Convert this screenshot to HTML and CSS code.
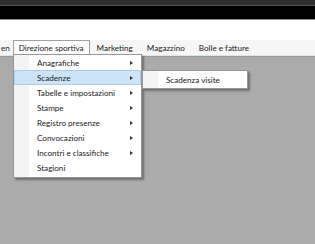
FILE: index.html
```html
<!DOCTYPE html>
<html>
<head>
<meta charset="utf-8" />
<title>Direzione sportiva</title>
<link rel="stylesheet" href="styles.css">
</head>
<body>
<div id="window">
	<div class="titlebar"></div>
	<div class="toolbar"></div>
	<div class="blank"></div>
	<div class="menubar">
		<span class="menu-item cut">en</span>
		<span class="menu-item open">Direzione sportiva</span>
		<span class="menu-item">Marketing</span>
		<span class="menu-item">Magazzino</span>
		<span class="menu-item">Bolle e fatture</span>
	</div>
	<div class="workspace"></div>

	<div class="dropdown">
		<div class="entry"><span class="label">Anagrafiche</span><span class="arrow"></span></div>
		<div class="entry active"><span class="label">Scadenze</span><span class="arrow"></span></div>
		<div class="entry"><span class="label">Tabelle e impostazioni</span><span class="arrow"></span></div>
		<div class="entry"><span class="label">Stampe</span><span class="arrow"></span></div>
		<div class="entry"><span class="label">Registro presenze</span><span class="arrow"></span></div>
		<div class="entry"><span class="label">Convocazioni</span><span class="arrow"></span></div>
		<div class="entry"><span class="label">Incontri e classifiche</span><span class="arrow"></span></div>
		<div class="entry"><span class="label">Stagioni</span></div>
	</div>

	<div class="dropdown submenu">
		<div class="entry"><span class="label">Scadenza visite</span></div>
	</div>
</div>
</body>
</html>
```

FILE: styles.css
```css
body {
	margin: 0;
	background: #ababab;
	font-family: Lato, "Noto Sans", sans-serif;
	font-size: 8.1px;
	color: #1a1a1a;
}
#window {
	position: relative;
	width: 315px;
	height: 244px;
	overflow: hidden;
	display: flex;
	flex-direction: column;
}
.titlebar {
	height: 5px;
	background: #2f2f2f;
	border-bottom: 1px solid #555555;
}
.toolbar {
	height: 13px;
	background: #000000;
	border-bottom: 1px solid #8c8c8c;
}
.blank {
	height: 20px;
	background: #ffffff;
}
.menubar {
	height: 15px;
	background: #f6f6f6;
	border-bottom: 1px solid #e2e2e2;
	display: flex;
	align-items: stretch;
}
.menu-item {
	display: flex;
	align-items: center;
	padding: 0 6px;
	border: 1px solid transparent;
	border-bottom: none;
}
.menu-item.cut {
	padding: 0 2px 0 0;
}
.menu-item.open {
	padding: 0 5px;
	background: #ffffff;
	border-color: #a0a0a0;
}
.workspace {
	flex: 1;
	background: #ababab;
	border-top: 1px solid #9a9a9a;
}

.dropdown {
	position: absolute;
	left: 13px;
	top: 54px;
	width: 127px;
	padding: 0 0 2px;
	background: #ffffff;
	border: 1px solid #979797;
	box-shadow: 2px 2px 2px rgba(0, 0, 0, 0.35);
	background-image: linear-gradient(to right, #f4f4f4 15px, #ffffff 15px);
}
.entry {
	height: 15px;
	display: flex;
	align-items: center;
	padding-left: 23px;
	padding-right: 8px;
}
.entry .label {
	flex: 1;
}
.entry.active {
	background: #cde4f7;
	box-shadow: inset 0 0 0 1px #a9cdee;
}
.arrow {
	width: 0;
	height: 0;
	border-top: 2.5px solid transparent;
	border-bottom: 2.5px solid transparent;
	border-left: 3px solid #333333;
}
.submenu {
	left: 142px;
	top: 70px;
	width: 104px;
	padding: 1px 0;
}
.submenu .entry {
	padding-left: 23px;
}
```
